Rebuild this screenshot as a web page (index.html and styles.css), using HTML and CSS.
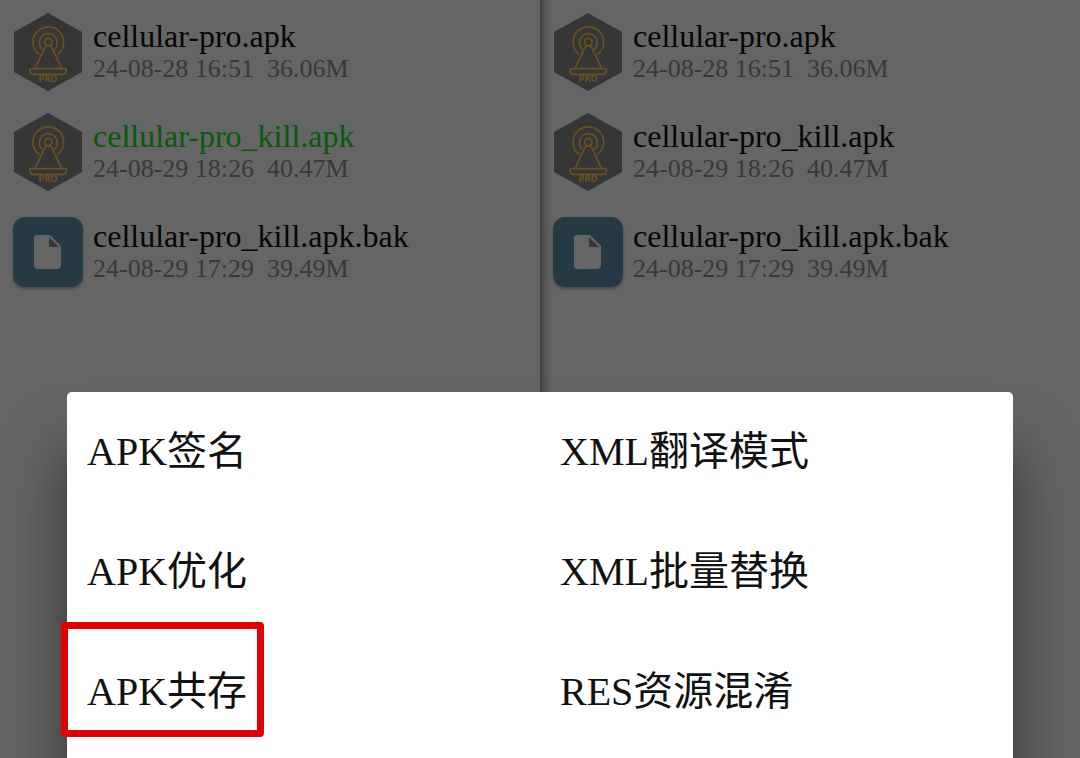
FILE: index.html
```html
<!DOCTYPE html>
<html lang="zh-CN">
<head>
<meta charset="utf-8">
<meta name="viewport" content="width=device-width, initial-scale=1">
<title>cellular-pro</title>
<link rel="stylesheet" href="styles.css">
</head>
<body>
<svg class="sprite" aria-hidden="true">
  <symbol id="icon-cellular" viewBox="42 39 204 234">
    <path class="hex" d="M144 39 246 96V216L144 273 42 216V96Z"/>
    <g class="antenna">
      <circle cx="145" cy="126" r="11"/>
      <path d="M126 147A27 27 0 1 1 164 147"/>
      <path d="M117 163A46 46 0 1 1 173 163"/>
      <path d="M137 138 105 205M153 138 185 205M137 138H153"/>
      <path d="M94 206H196Q200 206 199 211L197 218Q196 223 190 223H99Q94 223 92 218L90 211Q89 206 94 206Z"/>
    </g>
  </symbol>
  <symbol id="icon-file" viewBox="0 0 70 70">
    <path class="sheet" d="M24 18H37L48 29V48Q48 52 44 52H25Q21 52 21 48V21Q21 18 24 18Z"/>
    <path class="fold" d="M36 20V30H46Z"/>
  </symbol>
</svg>

<main class="panes">
  <ul class="pane">
    <li><button class="file" type="button">
      <svg class="icon" viewBox="0 0 70 78" aria-hidden="true"><use href="#icon-cellular"/><text class="pro" x="35" y="69" text-anchor="middle">PRO</text></svg>
      <span class="info"><span class="name">cellular-pro.apk</span><span class="meta"><span>24-08-28 16:51</span><span>36.06M</span></span></span>
    </button></li>
    <li><button class="file file-active" type="button">
      <svg class="icon" viewBox="0 0 70 78" aria-hidden="true"><use href="#icon-cellular"/><text class="pro" x="35" y="69" text-anchor="middle">PRO</text></svg>
      <span class="info"><span class="name">cellular-pro_kill.apk</span><span class="meta"><span>24-08-29 18:26</span><span>40.47M</span></span></span>
    </button></li>
    <li><button class="file" type="button">
      <svg class="icon icon-tile" aria-hidden="true"><use href="#icon-file"/></svg>
      <span class="info"><span class="name">cellular-pro_kill.apk.bak</span><span class="meta"><span>24-08-29 17:29</span><span>39.49M</span></span></span>
    </button></li>
  </ul>
  <ul class="pane pane-right">
    <li><button class="file" type="button">
      <svg class="icon" viewBox="0 0 70 78" aria-hidden="true"><use href="#icon-cellular"/><text class="pro" x="35" y="69" text-anchor="middle">PRO</text></svg>
      <span class="info"><span class="name">cellular-pro.apk</span><span class="meta"><span>24-08-28 16:51</span><span>36.06M</span></span></span>
    </button></li>
    <li><button class="file" type="button">
      <svg class="icon" viewBox="0 0 70 78" aria-hidden="true"><use href="#icon-cellular"/><text class="pro" x="35" y="69" text-anchor="middle">PRO</text></svg>
      <span class="info"><span class="name">cellular-pro_kill.apk</span><span class="meta"><span>24-08-29 18:26</span><span>40.47M</span></span></span>
    </button></li>
    <li><button class="file" type="button">
      <svg class="icon icon-tile" aria-hidden="true"><use href="#icon-file"/></svg>
      <span class="info"><span class="name">cellular-pro_kill.apk.bak</span><span class="meta"><span>24-08-29 17:29</span><span>39.49M</span></span></span>
    </button></li>
  </ul>
</main>

<div class="dialog" role="dialog" aria-label="APK">
  <button class="action" type="button">APK签名</button>
  <button class="action" type="button">XML翻译模式</button>
  <button class="action" type="button">APK优化</button>
  <button class="action" type="button">XML批量替换</button>
  <button class="action action-marked" type="button">APK共存</button>
  <button class="action" type="button">RES资源混淆</button>
</div>
</body>
</html>
```

FILE: styles.css
```css
*,
*::after {
  box-sizing: border-box;
}

body {
  margin: 0;
  min-height: 100vh;
  position: relative;
  overflow: hidden;
  background: #656565;
  font-family: "Liberation Serif", "Noto Sans CJK SC", serif;
}

button {
  border: 0;
  background: none;
  color: inherit;
  font: inherit;
  text-align: left;
}

.sprite {
  position: absolute;
  width: 0;
  height: 0;
}

.panes {
  display: grid;
  grid-template-columns: 1fr 1fr;
  min-height: 100vh;
}

.pane {
  margin: 0;
  padding: 2px 0 0;
  list-style: none;
}

.pane-right {
  background: linear-gradient(90deg, #3c3c3c, #545454 4px, #656565 13px);
}

.file {
  display: flex;
  align-items: center;
  gap: 10px;
  width: 100%;
  height: 100px;
  padding: 0 13px;
  color: #060606;
}

.icon {
  flex: none;
  width: 70px;
  height: 78px;
}

.icon-tile {
  height: 70px;
  border-radius: 12px;
  background: #263a46;
  box-shadow: 0 2px 3px #484848;
}

.info {
  display: flex;
  flex-direction: column;
  padding-bottom: 2px;
}

.name {
  font-size: 32px;
  line-height: 36px;
}

.file-active .name {
  color: #085a0b;
}

.meta {
  display: flex;
  gap: 13px;
  color: #393939;
  font-size: 26px;
  line-height: 30px;
}

.hex {
  fill: #363636;
}

.antenna {
  fill: none;
  stroke: #69501f;
  stroke-width: 5;
  stroke-linecap: round;
}

.pro {
  fill: #69501f;
  font: bold 8px "DejaVu Sans", sans-serif;
}

.sheet {
  fill: #656565;
}

.fold {
  fill: #383838;
}

.dialog {
  position: absolute;
  inset: 392px 67px 0;
  display: grid;
  grid-template-columns: 1fr 1fr;
  grid-auto-rows: 120px;
  border-radius: 5px 5px 0 0;
  background: #fff;
  box-shadow: 0 60px 60px rgba(0, 0, 0, 0.5);
}

.action {
  position: relative;
  padding: 0 20px;
  color: #111;
  font-size: 40px;
  line-height: 48px;
}

.action-marked::after {
  content: "";
  position: absolute;
  top: -10px;
  left: -6px;
  width: 203px;
  height: 115px;
  border: 7px solid #dc0305;
  border-radius: 4px;
}
```
